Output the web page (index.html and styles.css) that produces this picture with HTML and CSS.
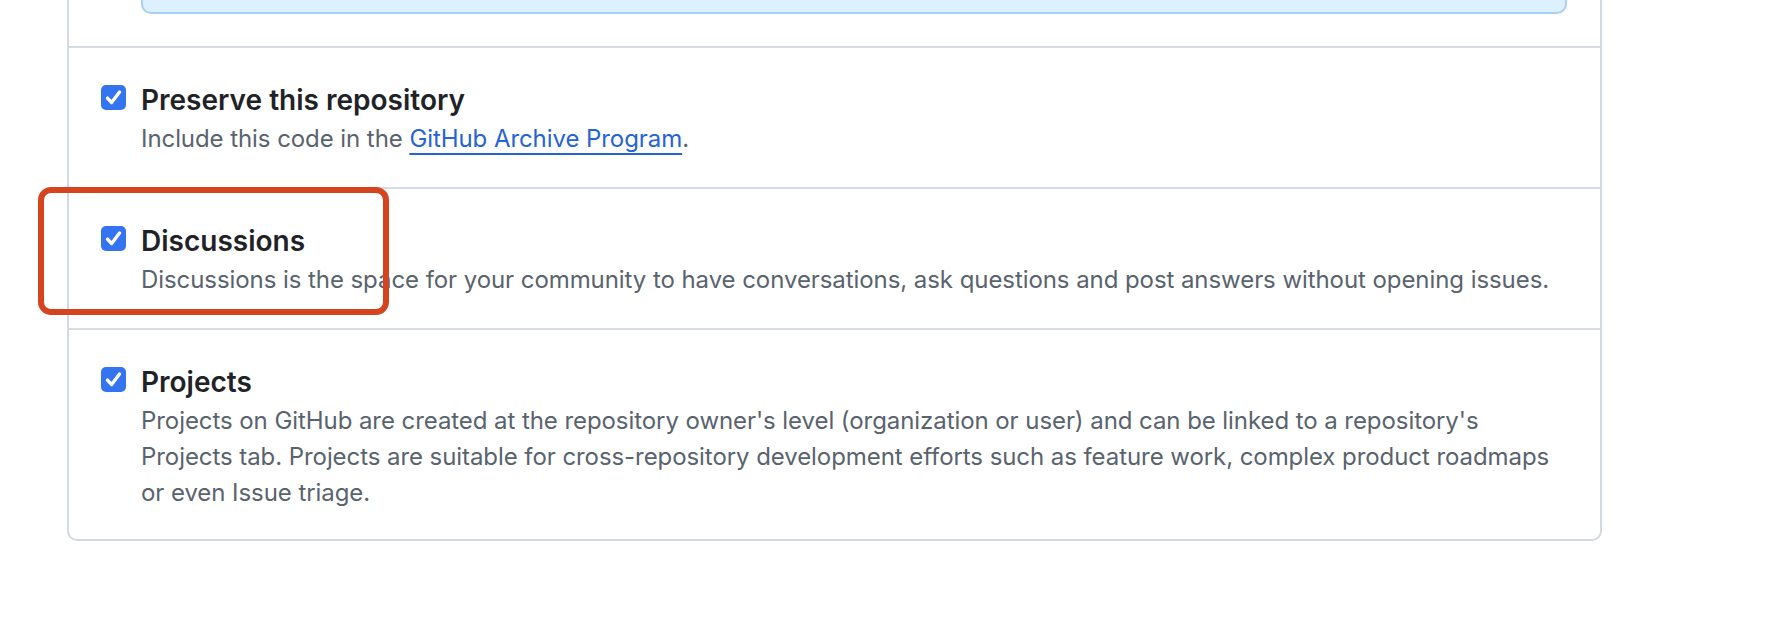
FILE: index.html
```html
<!DOCTYPE html>
<html lang="en">
<head>
<meta charset="utf-8">
<title>Repository settings – Features</title>
<link rel="stylesheet" href="styles.css">
</head>
<body>
<div class="page">
  <div class="card">
    <div class="row row-flash">
      <div class="flash"></div>
    </div>
    <div class="row">
      <span class="checkbox"><svg viewBox="0 0 24 24" width="25" height="25"><path d="M6.2 12.6 L10.2 16.8 L17.8 6.8" fill="none" stroke="#fff" stroke-width="3.2" stroke-linecap="round" stroke-linejoin="round"/></svg></span>
      <div class="text">
        <div class="title">Preserve this repository</div>
        <div class="desc">Include this code in the <a href="#" class="link">GitHub Archive Program</a>.</div>
      </div>
    </div>
    <div class="row">
      <span class="checkbox"><svg viewBox="0 0 24 24" width="25" height="25"><path d="M6.2 12.6 L10.2 16.8 L17.8 6.8" fill="none" stroke="#fff" stroke-width="3.2" stroke-linecap="round" stroke-linejoin="round"/></svg></span>
      <div class="text">
        <div class="title">Discussions</div>
        <div class="desc">Discussions is the space for your community to have conversations, ask questions and post answers without opening issues.</div>
      </div>
    </div>
    <div class="row">
      <span class="checkbox"><svg viewBox="0 0 24 24" width="25" height="25"><path d="M6.2 12.6 L10.2 16.8 L17.8 6.8" fill="none" stroke="#fff" stroke-width="3.2" stroke-linecap="round" stroke-linejoin="round"/></svg></span>
      <div class="text">
        <div class="title">Projects</div>
        <div class="desc">Projects on GitHub are created at the repository owner's level (organization or user) and can be linked to a repository's Projects tab. Projects are suitable for cross-repository development efforts such as feature work, complex product roadmaps or even Issue triage.</div>
      </div>
    </div>
  </div>
  <div class="highlight"></div>
</div>
</body>
</html>
```
FILE: styles.css
```css
html, body {
  margin: 0;
  background: #ffffff;
}
body {
  font-family: Inter, "Noto Sans", sans-serif;
  color: #1f2328;
  overflow: hidden;
}
.page {
  position: relative;
  display: flow-root;
  padding-left: 67px;
  width: 1535px;
}
.card {
  margin-top: -61px;
  border: 2px solid #d3d9e0;
  border-top: none;
  border-radius: 0 0 10px 10px;
  background: #fff;
}
.row {
  display: flex;
  align-items: flex-start;
  gap: 15px;
  padding: 34px 24px 30px 32px;
  border-top: 2px solid #d6dce2;
}
.row:last-child {
  padding-bottom: 28px;
}
.row-flash {
  display: block;
  border-top: none;
  padding: 0 33px 32px 72px;
}
.flash {
  height: 73px;
  background: #ddf0fd;
  border: 2px solid #aacffa;
  border-radius: 0 0 10px 10px;
  border-top: none;
}
.checkbox {
  flex: none;
  width: 25px;
  height: 25px;
  margin-top: 3px;
  background: #3574f0;
  border-radius: 5px;
  display: flex;
}
.checkbox svg {
  display: block;
}
.text {
  flex: 1;
  min-width: 0;
}
.title {
  font-size: 28px;
  line-height: 36px;
  font-weight: 600;
  color: #1f2328;
  margin-bottom: 3px;
}
.desc {
  font-size: 24px;
  letter-spacing: -0.07px;
  line-height: 36px;
  color: #59636e;
}
.link {
  color: #2563d6;
  text-decoration: underline;
  text-decoration-thickness: 2px;
  text-underline-offset: 6px;
}
.highlight {
  position: absolute;
  left: 38px;
  top: 187px;
  width: 339px;
  height: 116px;
  border: 6px solid #d6441f;
  border-radius: 13px;
}
```
